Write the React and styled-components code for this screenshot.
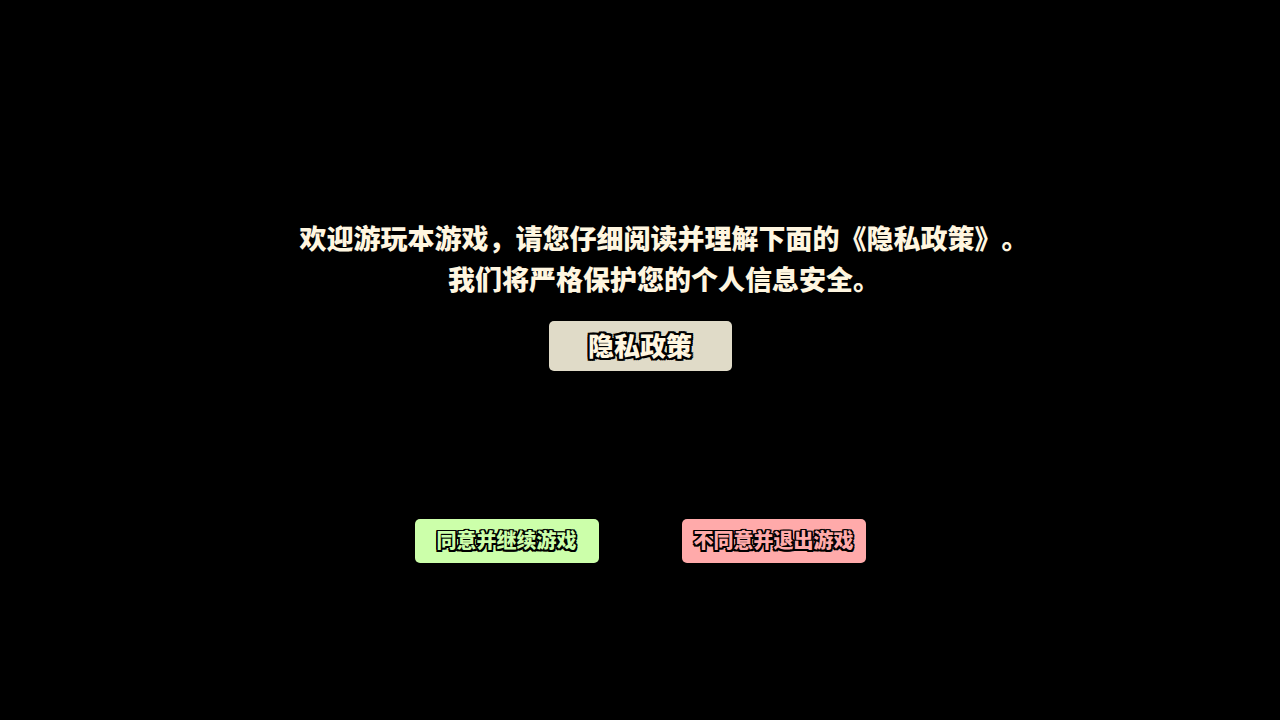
import styled, { createGlobalStyle } from "styled-components";

const GlobalStyle = createGlobalStyle`
   html, body {
      margin: 0;
      padding: 0;
      background: #000;
   }
   body {
      font-family: "Noto Sans CJK SC", "Noto Sans", sans-serif;
      text-spacing-trim: space-all;
   }
`

const outline = (w) => `
   text-shadow:
      ${w}px 0 0 #000, -${w}px 0 0 #000, 0 ${w}px 0 #000, 0 -${w}px 0 #000,
      ${w}px ${w}px 0 #000, -${w}px ${w}px 0 #000, ${w}px -${w}px 0 #000, -${w}px -${w}px 0 #000;
`

const Page = styled.div`
   width: 1280px;
   height: 720px;
   background: #000;
   display: flex;
   flex-direction: column;
   align-items: center;
   padding-top: 217px;
   box-sizing: border-box;
`

const Notice = styled.div`
   padding-left: 48px;
   text-align: center;
   color: #fff6e0;
   font-size: 27px;
   font-weight: 900;
   line-height: 41px;
   text-spacing-trim: space-all;
`

const PolicyButton = styled.button`
   margin-top: 22px;
   width: 183px;
   height: 50px;
   border: none;
   border-radius: 5px;
   background: #e0dbc8;
   color: #fff6e0;
   font-family: inherit;
   font-size: 26px;
   font-weight: 900;
   padding: 0 0 4px;
   cursor: pointer;
   ${outline(2)}
`

const Actions = styled.div`
   margin-top: 148px;
   display: flex;
   gap: 83px;
`

const ActionButton = styled.button`
   width: 184px;
   height: 44px;
   border: none;
   border-radius: 5px;
   background: ${({ $bg }) => $bg};
   color: ${({ $bg }) => $bg};
   font-family: inherit;
   font-size: 20px;
   font-weight: 900;
   padding: 0 0 4px;
   cursor: pointer;
   ${outline(1.5)}
`

export default function App() {
   return (
      <>
         <GlobalStyle />
         <Page>
            <Notice>
               欢迎游玩本游戏，请您仔细阅读并理解下面的《隐私政策》。<br />
               我们将严格保护您的个人信息安全。
            </Notice>
            <PolicyButton>隐私政策</PolicyButton>
            <Actions>
               <ActionButton $bg="#ccffaa">同意并继续游戏</ActionButton>
               <ActionButton $bg="#ffaaaa">不同意并退出游戏</ActionButton>
            </Actions>
         </Page>
      </>
   );
}
